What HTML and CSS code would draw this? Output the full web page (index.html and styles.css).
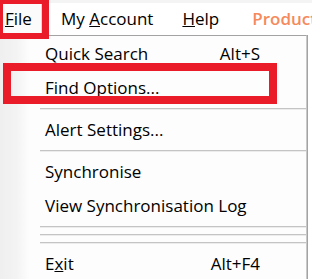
FILE: index.html
```html
<!DOCTYPE html>
<html lang="en">

<head>
    <meta charset="UTF-8">
    <meta name="viewport" content="width=device-width, initial-scale=1.0">
    <title>File Menu</title>
    <link rel="stylesheet" href="styles.css">
</head>

<body>
    <div class="menubar">
        <div class="menubar__item menubar__item--marked"><u>F</u>ile</div>
        <div class="menubar__item">My <u>A</u>ccount</div>
        <div class="menubar__item"><u>H</u>elp</div>
        <div class="menubar__item menubar__item--accent">Products</div>
    </div>
    <ul class="dropdown">
        <li class="dropdown__item">
            <span>Quick Search</span>
            <span class="dropdown__shortcut">Alt+S</span>
        </li>
        <li class="dropdown__item dropdown__item--marked">
            <span>Find Options...</span>
        </li>
        <li class="dropdown__separator"></li>
        <li class="dropdown__item">
            <span>Alert Settings...</span>
        </li>
        <li class="dropdown__separator"></li>
        <li class="dropdown__item">
            <span>Synchronise</span>
        </li>
        <li class="dropdown__item">
            <span>View Synchronisation Log</span>
        </li>
        <li class="dropdown__separator"></li>
        <li class="dropdown__separator"></li>
        <li class="dropdown__separator"></li>
        <li class="dropdown__item">
            <span>E<u>x</u>it</span>
            <span class="dropdown__shortcut">Alt+F4</span>
        </li>
    </ul>
</body>

</html>
```

FILE: styles.css
```css
:root {
    --text-color: #000;
    --marker-color: #ea1c2a;
    --accent-color: #f58a5c;
    --border-color: #a3a3a3;
    --line-color: #c4c4c4;
}

body {
    margin: 0;
    width: 312px;
    height: 279px;
    overflow: hidden;
    background-color: #fff;
    font-family: 'Open Sans', 'Noto Sans', sans-serif;
    font-size: 17px;
    color: var(--text-color);
}

.menubar {
    display: flex;
    align-items: flex-start;
    height: 32px;
    border-top: 3px solid #f4f4f4;
    white-space: nowrap;
}

.menubar__item {
    flex-shrink: 0;
    height: 32px;
    line-height: 32px;
    margin-left: 12px;
}

.menubar__item:nth-child(3) {
    margin-left: 29px;
}

.menubar__item:nth-child(4) {
    margin-left: 33px;
}

.menubar__item--marked {
    position: relative;
    z-index: 1;
    margin: -3px 0 0 0;
    width: 37px;
    height: 29px;
    line-height: 30px;
    padding-left: 2px;
    border-style: solid;
    border-color: var(--marker-color);
    border-width: 4px 7px 6px 3px;
    background-color: #fbfbfb;
    box-shadow: inset -1px 0 0 #dadada;
}

.menubar__item--accent {
    color: var(--accent-color);
    font-weight: 600;
}

.dropdown {
    list-style: none;
    margin: 0;
    padding: 0;
    width: 306px;
    border-top: 1px solid var(--border-color);
    border-right: 1px solid #c9c9c9;
    box-shadow: 1px 0 0 var(--border-color);
    background: linear-gradient(to right, #efefef 0, #f3f3f3 16px, #fdfdfd 30px);
}

.dropdown__item {
    position: relative;
    display: flex;
    justify-content: space-between;
    align-items: center;
    height: 34px;
    padding: 0 46px 0 45px;
}

.dropdown__item--marked::after {
    content: '';
    position: absolute;
    left: 3px;
    top: -7px;
    width: 258px;
    height: 25px;
    border: 8px solid var(--marker-color);
}

.dropdown__separator {
    height: 8px;
    display: flex;
    align-items: center;
    padding-left: 40px;
}

.dropdown__separator::before {
    content: '';
    flex: 1;
    height: 1px;
    background-color: var(--line-color);
    box-shadow: 0 1px 0 #ececec;
}
```
